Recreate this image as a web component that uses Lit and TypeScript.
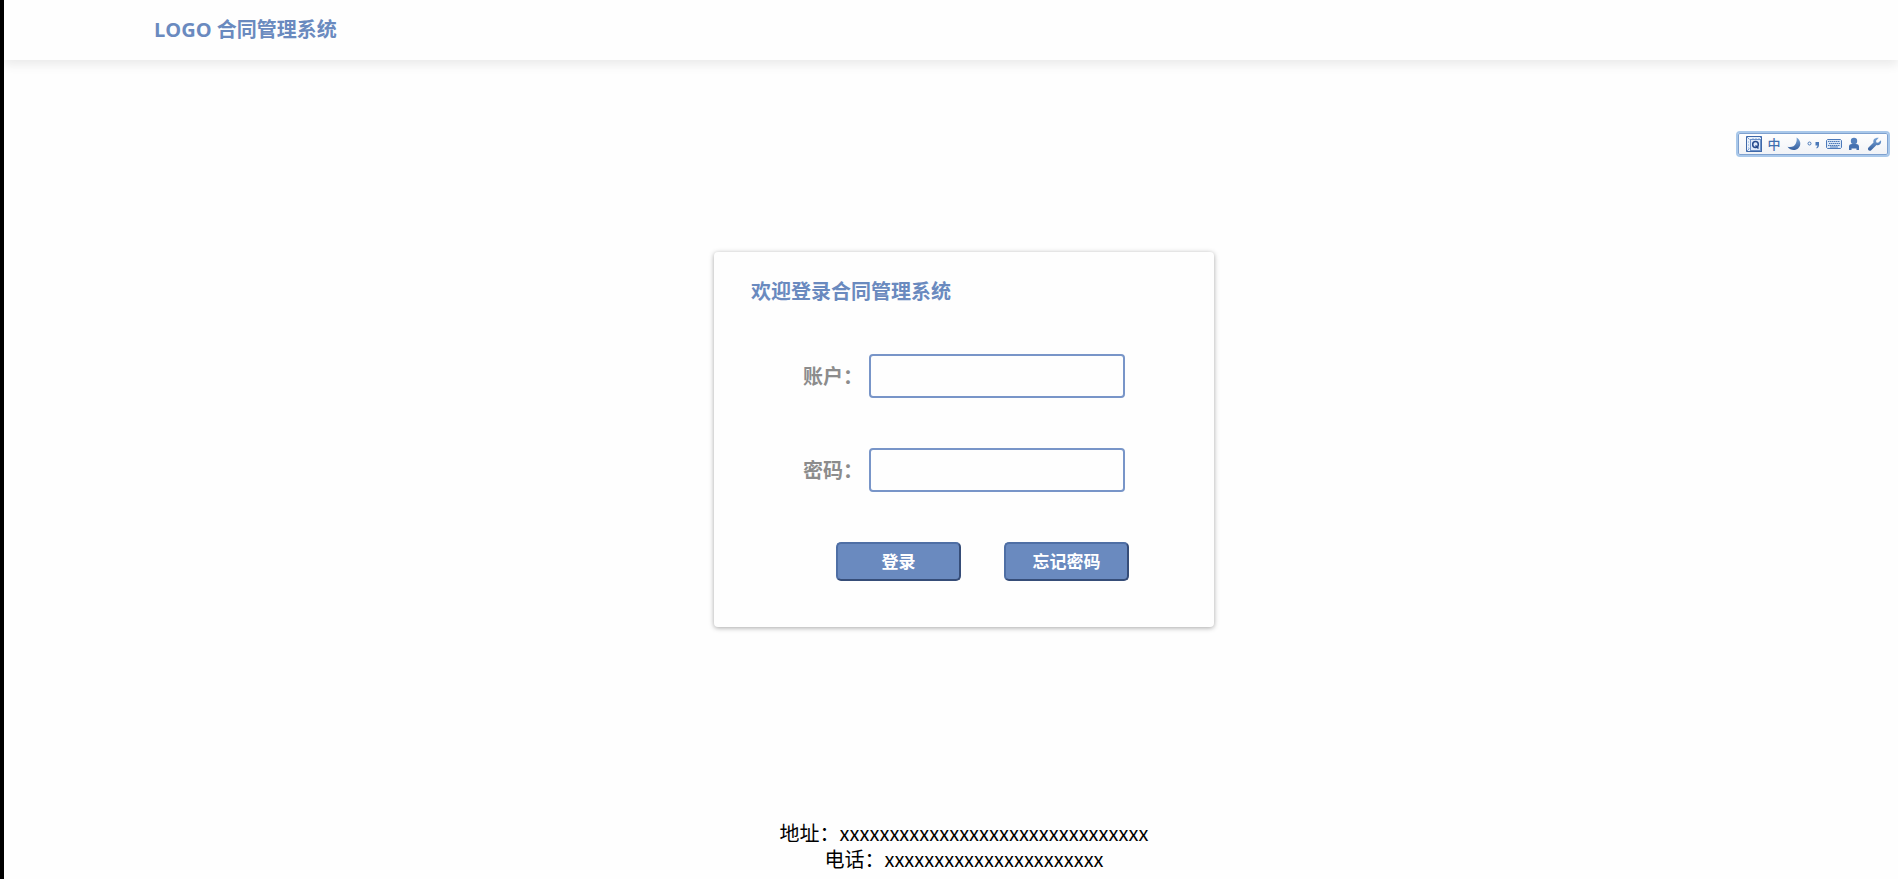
import { LitElement, html, css, svg } from "lit";
import { customElement } from "lit/decorators.js";

const box = svg`
  <rect x="2.500" y="2.500" width="15" height="15" fill="#eaf1fa" stroke="#3f68a8"/>
  <path d="M2.500 2.500l3 3M17.500 2.500l-3 3M2.500 17.500l3-3" stroke="#7d9fd0"/>
  <rect x="6.500" y="5.500" width="10" height="11" fill="#dfeafa" stroke="#6f93c9"/>
  <path d="M4.500 7v9M8 4.500h8" stroke="#b9cfec" stroke-dasharray="2 1"/>
  <ellipse cx="11.500" cy="10.500" rx="2.800" ry="3" fill="none" stroke="#264a8c" stroke-width="1.500"/>
  <path d="M11.500 11.500l3 3" stroke="#264a8c" stroke-width="1.500"/>`;

const moon = svg`
  <path d="M12.500 3.500C16.800 6 17.500 11 14.500 14C11.500 17 6.500 16.800 3.500 12.800C7.500 13.800 10.500 12.300 11.800 9.500C12.700 7.500 13 5.500 12.500 3.500Z" fill="url(#ink)"/>`;

const marks = svg`
  <circle cx="5.500" cy="9.500" r="1.500" fill="none" stroke="#4a78b8"/>
  <path d="M11.500 8h3.500v3c0 2-1 3-2.500 3.500v-1.300c.6-.3 1-.8 1-1.700h-2z" fill="#4a78b8"/>`;

const keyboard = svg`
  <path d="M3.500 5.500h13l1 1v7l-1 1h-13l-1-1v-7z" fill="#dce8f6" stroke="#4d7aba"/>
  <path d="M4 7.500h12M5 9.500h11M4 11.500h12" stroke="#4d7aba" stroke-dasharray="1.500 .5"/>
  <path d="M6 13h8" stroke="#4d7aba"/>`;

const person = svg`
  <circle cx="10" cy="7" r="3.200" fill="#5380bd"/>
  <path d="M5 16v-3.500C5 10.800 6.300 10 8 10h4c1.700 0 3 .8 3 2.500V16h-2.500v-1.500h-5V16z" fill="#4571b0"/>`;

const wrench = svg`
  <path d="M14.800 3.800L12 6.700l.4 1.700 1.700.4L17 6.300c.4 2-.1 3.500-1.200 4.300-1 .8-2.300.8-3.300.4L7.200 16.200c-.7.700-1.900.8-2.700.1-.8-.8-.7-2 0-2.700l5-5c-.4-1.200-.2-2.600.7-3.500 1-1 2.700-1.700 4.600-1.300z" fill="url(#ink)"/>`;

const tools = [
  { name: "输入法", art: box },
  { name: "中文", text: "中" },
  { name: "半角", art: moon },
  { name: "标点", art: marks },
  { name: "软键盘", art: keyboard },
  { name: "用户", art: person },
  { name: "设置", art: wrench },
];

@customElement("ime-bar")
export class ImeBar extends LitElement {
  static styles = css`
    :host {
      display: flex;
      box-sizing: border-box;
      padding: 1px 4px 1px 6px;
      border: 2px solid #a9c8ea;
      border-radius: 4px;
      background: linear-gradient(#fff, #f0f2f6);
      box-shadow: inset 0 0 0 1px #7fa1cf;
    }
    .tool {
      display: block;
      width: 20px;
      height: 20px;
      padding: 0;
      border: 0;
      background: none;
      color: #3f6fb0;
      font: 500 13px/20px "Noto Sans CJK SC", sans-serif;
      text-align: center;
    }
    .art {
      display: block;
      width: 20px;
      height: 20px;
    }
  `;

  render() {
    return tools.map(
      (t) => html`<button class="tool" type="button" aria-label=${t.name}>
        ${t.text ??
        html`<svg class="art" viewBox="0 0 20 20" fill="none">
          <defs>
            <linearGradient id="ink" x1="0" y1="0" x2="0" y2="1">
              <stop offset="0" stop-color="#7ba6d8" />
              <stop offset="1" stop-color="#36609f" />
            </linearGradient>
          </defs>
          ${t.art}
        </svg>`}
      </button>`
    );
  }
}

@customElement("app-root")
export class AppRoot extends LitElement {
  static styles = css`
    :host {
      display: flex;
      flex-direction: column;
      box-sizing: border-box;
      min-height: 100vh;
      position: relative;
      border-left: 4px solid #000;
      background: #fefefe;
      color: #000;
      font-family: "Noto Sans CJK SC", sans-serif;
      font-size: 20px;
      line-height: 26px;
    }
    .header {
      display: flex;
      align-items: center;
      height: 60px;
      box-sizing: border-box;
      padding: 0 150px;
      box-shadow: 0 5px 10px rgba(0, 0, 0, 0.08);
    }
    .brand {
      margin: 0;
      color: #6a8abf;
      font-family: "Open Sans", "Noto Sans CJK SC", sans-serif;
      font-size: 20px;
      font-weight: 700;
    }
    .ime {
      position: absolute;
      top: 131px;
      right: 8px;
    }
    .main {
      flex: 1;
      display: flex;
      align-items: center;
      justify-content: center;
      padding: 0 0 2px 26px;
    }
    .card {
      box-sizing: border-box;
      width: 500px;
      padding: 26px 37px 46px;
      border-radius: 4px;
      box-shadow: 0 1px 5px rgba(0, 0, 0, 0.35);
    }
    .title {
      margin: 0;
      color: #6a8abf;
      font-size: 20px;
      font-weight: 700;
    }
    .fields {
      display: grid;
      gap: 50px;
      padding: 50px 0 50px 52px;
    }
    .field {
      display: flex;
      align-items: center;
    }
    .label {
      width: 66px;
      color: #8c8c8c;
      font-weight: 700;
    }
    .input {
      box-sizing: border-box;
      width: 256px;
      height: 44px;
      padding: 0 10px;
      border: 2px solid #7895c8;
      border-radius: 4px;
      background: #fefefe;
      font: inherit;
    }
    .actions {
      display: flex;
      gap: 43px;
      padding-left: 85px;
    }
    .button {
      box-sizing: border-box;
      width: 125px;
      height: 39px;
      padding: 0;
      border: 2px solid;
      border-color: #4f6fa5 #364d78 #364d78 #4f6fa5;
      border-radius: 5px;
      background: #6a8abf;
      color: #fff;
      font: 700 17px/24px "Noto Sans CJK SC", sans-serif;
    }
    .footer {
      padding: 0 0 7px 26px;
      text-align: center;
    }
    .line {
      margin: 0;
    }
  `;

  render() {
    return html`
      <header class="header"><h1 class="brand">LOGO 合同管理系统</h1></header>
      <ime-bar class="ime"></ime-bar>
      <main class="main">
        <form class="card">
          <h2 class="title">欢迎登录合同管理系统</h2>
          <div class="fields">
            <div class="field">
              <label class="label" for="account">账户：</label>
              <input class="input" id="account" type="text" />
            </div>
            <div class="field">
              <label class="label" for="password">密码：</label>
              <input class="input" id="password" type="password" />
            </div>
          </div>
          <div class="actions">
            <button class="button" type="button">登录</button>
            <button class="button" type="button">忘记密码</button>
          </div>
        </form>
      </main>
      <footer class="footer">
        <p class="line">地址：${"x".repeat(31)}</p>
        <p class="line">电话：${"x".repeat(22)}</p>
      </footer>
    `;
  }
}
